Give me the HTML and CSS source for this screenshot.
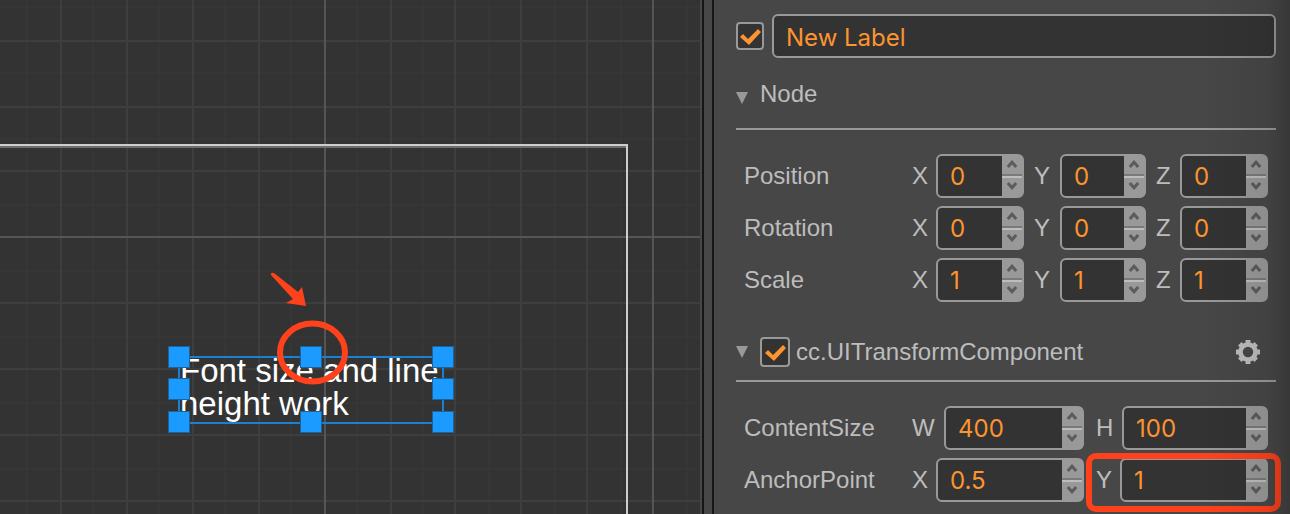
FILE: index.html
```html
<!DOCTYPE html>
<html lang="en">
<head>
    <meta charset="UTF-8">
    <meta name="viewport" content="width=device-width, initial-scale=1.0">
    <title>Scene Editor</title>
    <link rel="stylesheet" href="styles.css">
</head>
<body>
    <svg class="symbols" aria-hidden="true">
        <symbol id="chevron-up" viewBox="0 0 12 8"><path d="M1.8 7 L6 2.2 L10.2 7"/></symbol>
        <symbol id="chevron-down" viewBox="0 0 12 8"><path d="M1.8 1 L6 5.8 L10.2 1"/></symbol>
    </svg>

    <main class="scene">
        <svg class="grid" aria-hidden="true">
            <!-- fine lines -->
            <path class="grid-fine" d="M27 0V2000 M93 0V2000 M159 0V2000 M225 0V2000 M291 0V2000 M357 0V2000 M423 0V2000 M489 0V2000 M555 0V2000 M621 0V2000 M687 0V2000
                M0 7H2000 M0 73H2000 M0 139H2000 M0 205H2000 M0 271H2000 M0 337H2000 M0 403H2000 M0 469H2000"/>
            <path class="grid-minor" d="M61 0V2000 M127 0V2000 M193 0V2000 M259 0V2000 M391 0V2000 M455 0V2000 M521 0V2000 M587 0V2000
                M0 41H2000 M0 107H2000 M0 171H2000 M0 303H2000 M0 369H2000 M0 435H2000 M0 501H2000"/>
            <path class="grid-major" d="M325 0V2000 M653 0V2000 M0 237H2000"/>
            <!-- design canvas border -->
            <path class="frame-shade" d="M0 147H626"/>
            <path class="frame-line" d="M0 145H627V2000"/>
        </svg>

        <div class="node">
            <p class="node-text">Font size and line height work</p>
            <span class="handle top left"></span>
            <span class="handle top center"></span>
            <span class="handle top right"></span>
            <span class="handle middle left"></span>
            <span class="handle middle right"></span>
            <span class="handle bottom left"></span>
            <span class="handle bottom center"></span>
            <span class="handle bottom right"></span>
        </div>

        <svg class="marks" aria-hidden="true">
            <path class="arrow" d="M271 275 Q270 272 274 273 L298 292 L302 287 L306 306 L286 303 L293 299 Z"/>
            <ellipse class="ring" cx="312.5" cy="352.5" rx="32.5" ry="29"/>
        </svg>
    </main>

    <div class="splitter"></div>

    <aside class="inspector">
        <div class="name-row">
            <input type="checkbox" class="check" aria-label="Node enabled" checked>
            <input type="text" class="name-input" aria-label="Node name" value="New Label">
        </div>

        <section>
            <header class="section-header tall">
                <span class="fold"></span>
                <h2>Node</h2>
            </header>
            <div class="props">
                <div class="prop">
                    <span class="prop-name">Position</span>
                    <div class="field">
                        <label for="pos-x">X</label>
                        <div class="number">
                            <input type="text" id="pos-x" value="0">
                            <div class="spin">
                                <button aria-label="Increase"><svg><use href="#chevron-up"/></svg></button>
                                <button aria-label="Decrease"><svg><use href="#chevron-down"/></svg></button>
                            </div>
                        </div>
                    </div>
                    <div class="field">
                        <label for="pos-y" class="axis-y">Y</label>
                        <div class="number">
                            <input type="text" id="pos-y" value="0">
                            <div class="spin">
                                <button aria-label="Increase"><svg><use href="#chevron-up"/></svg></button>
                                <button aria-label="Decrease"><svg><use href="#chevron-down"/></svg></button>
                            </div>
                        </div>
                    </div>
                    <div class="field">
                        <label for="pos-z">Z</label>
                        <div class="number">
                            <input type="text" id="pos-z" value="0">
                            <div class="spin">
                                <button aria-label="Increase"><svg><use href="#chevron-up"/></svg></button>
                                <button aria-label="Decrease"><svg><use href="#chevron-down"/></svg></button>
                            </div>
                        </div>
                    </div>
                </div>

                <div class="prop">
                    <span class="prop-name">Rotation</span>
                    <div class="field">
                        <label for="rot-x">X</label>
                        <div class="number">
                            <input type="text" id="rot-x" value="0">
                            <div class="spin">
                                <button aria-label="Increase"><svg><use href="#chevron-up"/></svg></button>
                                <button aria-label="Decrease"><svg><use href="#chevron-down"/></svg></button>
                            </div>
                        </div>
                    </div>
                    <div class="field">
                        <label for="rot-y" class="axis-y">Y</label>
                        <div class="number">
                            <input type="text" id="rot-y" value="0">
                            <div class="spin">
                                <button aria-label="Increase"><svg><use href="#chevron-up"/></svg></button>
                                <button aria-label="Decrease"><svg><use href="#chevron-down"/></svg></button>
                            </div>
                        </div>
                    </div>
                    <div class="field">
                        <label for="rot-z">Z</label>
                        <div class="number">
                            <input type="text" id="rot-z" value="0">
                            <div class="spin">
                                <button aria-label="Increase"><svg><use href="#chevron-up"/></svg></button>
                                <button aria-label="Decrease"><svg><use href="#chevron-down"/></svg></button>
                            </div>
                        </div>
                    </div>
                </div>

                <div class="prop">
                    <span class="prop-name">Scale</span>
                    <div class="field">
                        <label for="scale-x">X</label>
                        <div class="number">
                            <input type="text" id="scale-x" value="1">
                            <div class="spin">
                                <button aria-label="Increase"><svg><use href="#chevron-up"/></svg></button>
                                <button aria-label="Decrease"><svg><use href="#chevron-down"/></svg></button>
                            </div>
                        </div>
                    </div>
                    <div class="field">
                        <label for="scale-y" class="axis-y">Y</label>
                        <div class="number">
                            <input type="text" id="scale-y" value="1">
                            <div class="spin">
                                <button aria-label="Increase"><svg><use href="#chevron-up"/></svg></button>
                                <button aria-label="Decrease"><svg><use href="#chevron-down"/></svg></button>
                            </div>
                        </div>
                    </div>
                    <div class="field">
                        <label for="scale-z">Z</label>
                        <div class="number">
                            <input type="text" id="scale-z" value="1">
                            <div class="spin">
                                <button aria-label="Increase"><svg><use href="#chevron-up"/></svg></button>
                                <button aria-label="Decrease"><svg><use href="#chevron-down"/></svg></button>
                            </div>
                        </div>
                    </div>
                </div>
            </div>
        </section>

        <section>
            <header class="section-header">
                <span class="fold"></span>
                <input type="checkbox" class="check large" id="ui-transform" checked>
                <h2><label for="ui-transform">cc.UITransformComponent</label></h2>
                <button class="gear" aria-label="Component settings">
                    <svg viewBox="0 0 24 24">
                        <circle cx="12" cy="12" r="7.5" fill="none" stroke="currentColor" stroke-width="4.6"/>
                        <path d="M12 0V4 M12 20V24 M0 12H4 M20 12H24 M3.8 3.8L6.4 6.4 M17.6 17.6L20.2 20.2 M20.2 3.8L17.6 6.4 M6.4 17.6L3.8 20.2" stroke="currentColor" stroke-width="5"/>
                    </svg>
                </button>
            </header>
            <div class="props">
                <div class="prop pair">
                    <span class="prop-name">ContentSize</span>
                    <div class="field">
                        <label for="size-w" class="axis-w">W</label>
                        <div class="number">
                            <input type="text" id="size-w" value="400">
                            <div class="spin">
                                <button aria-label="Increase"><svg><use href="#chevron-up"/></svg></button>
                                <button aria-label="Decrease"><svg><use href="#chevron-down"/></svg></button>
                            </div>
                        </div>
                    </div>
                    <div class="field">
                        <label for="size-h" class="axis-y">H</label>
                        <div class="number">
                            <input type="text" id="size-h" value="100">
                            <div class="spin">
                                <button aria-label="Increase"><svg><use href="#chevron-up"/></svg></button>
                                <button aria-label="Decrease"><svg><use href="#chevron-down"/></svg></button>
                            </div>
                        </div>
                    </div>
                </div>

                <div class="prop pair">
                    <span class="prop-name">AnchorPoint</span>
                    <div class="field">
                        <label for="anchor-x">X</label>
                        <div class="number">
                            <input type="text" id="anchor-x" value="0.5">
                            <div class="spin">
                                <button aria-label="Increase"><svg><use href="#chevron-up"/></svg></button>
                                <button aria-label="Decrease"><svg><use href="#chevron-down"/></svg></button>
                            </div>
                        </div>
                    </div>
                    <div class="field highlighted">
                        <label for="anchor-y">Y</label>
                        <div class="number">
                            <input type="text" id="anchor-y" value="1">
                            <div class="spin">
                                <button aria-label="Increase"><svg><use href="#chevron-up"/></svg></button>
                                <button aria-label="Decrease"><svg><use href="#chevron-down"/></svg></button>
                            </div>
                        </div>
                    </div>
                </div>
            </div>
        </section>
    </aside>
</body>
</html>
```
FILE: styles.css
```css
* {
    box-sizing: border-box;
}
body {
    margin: 0;
    display: flex;
    min-height: 100vh;
    background: #474747;
    color: #bdbdbd;
    font-family: "Liberation Sans", Arial, sans-serif;
    font-size: 24px;
    overflow: hidden;
}
.symbols {
    position: absolute;
    width: 0;
    height: 0;
}

/* scene view */
.scene {
    position: relative;
    flex: 1;
    min-width: 0;
    overflow: hidden;
    background: #333;
    border-right: 2px solid #474747;
}
.grid,
.marks {
    position: absolute;
    top: 0;
    left: 0;
    width: 100%;
    height: 100%;
}
.grid path {
    fill: none;
    stroke-width: 2;
}
.grid .grid-fine {
    stroke: #363636;
}
.grid .grid-minor {
    stroke: #3e3e3e;
}
.grid .grid-major {
    stroke: #555;
}
.grid .frame-shade {
    stroke: #6b6e6b;
}
.grid .frame-line {
    stroke: #cbcecb;
}
.arrow {
    fill: #ff421c;
}
.ring {
    fill: none;
    stroke: #ff421c;
    stroke-width: 6;
}
.node {
    position: absolute;
    left: 178px;
    top: 356px;
    width: 266px;
    height: 68px;
    border: 2px solid #1a80d2;
}
.node-text {
    margin: -4px 0 0;
    color: white;
    font-size: 33px;
    line-height: 33px;
}
.handle {
    position: absolute;
    width: 22px;
    height: 22px;
    background: #1b9aff;
    border: 1px solid #1c629b;
}
.handle.top {
    top: -12px;
}
.handle.middle {
    top: 20px;
}
.handle.bottom {
    bottom: -11px;
}
.handle.left {
    left: -12px;
}
.handle.center {
    left: 120px;
}
.handle.right {
    right: -12px;
}

.splitter {
    width: 12px;
    border: solid #161616;
    border-width: 0 2px;
}

/* inspector */
.inspector {
    position: relative;
    width: 576px;
    padding: 14px 14px 12px 22px;
}
.inspector::after {
    content: "";
    position: absolute;
    top: 0;
    right: 0;
    bottom: 0;
    width: 90px;
    background: linear-gradient(to right, rgba(0, 0, 0, 0), rgba(0, 0, 0, 0.08) 75%, rgba(0, 0, 0, 0.22));
    pointer-events: none;
}
.name-row {
    display: flex;
    align-items: center;
    gap: 8px;
}
input[type="text"] {
    min-width: 0;
    background: #333;
    color: #fd942f;
    font-family: Inter, sans-serif;
    font-size: 24px;
    outline: none;
}
.name-input {
    flex: 1;
    height: 44px;
    padding: 2px 12px 0;
    border: 2px solid #999;
    border-radius: 6px;
}
.check {
    appearance: none;
    position: relative;
    flex: none;
    width: 28px;
    height: 28px;
    margin: 0;
    background: #333;
    border: 2px solid #999;
    border-radius: 4px;
}
.check.large {
    width: 30px;
    height: 30px;
}
.check:checked::after {
    content: "";
    position: absolute;
    top: 0;
    left: 0;
    width: 24px;
    height: 24px;
    background: #fd942f;
    clip-path: polygon(2px 13px, 5px 10px, 10px 15px, 20px 5px, 23px 8px, 11px 21px);
}
.check.large:checked::after {
    top: 1px;
    left: 1px;
}
.section-header {
    display: flex;
    align-items: center;
    height: 58px;
    border-bottom: 2px solid #999;
}
.section-header.tall {
    height: 72px;
    padding-top: 2px;
}
.section-header h2 {
    margin: 0;
    font-size: 24px;
    font-weight: normal;
}
.fold {
    width: 12px;
    height: 12px;
    margin-right: 12px;
    background: #999;
    clip-path: polygon(0 0, 100% 0, 50% 100%);
}
.tall .fold {
    margin-top: 8px;
}
.check + h2 {
    margin-left: 6px;
}
.gear {
    width: 24px;
    height: 24px;
    margin-left: auto;
    margin-right: 16px;
    padding: 0;
    border: none;
    background: none;
    color: #bdbdbd;
}
.gear svg {
    display: block;
}
.props {
    display: flex;
    flex-direction: column;
    gap: 8px;
    padding: 24px 8px 22px;
}
section:last-child .props {
    padding-bottom: 0;
}
.prop {
    display: grid;
    grid-template-columns: 158px repeat(3, 1fr);
    column-gap: 10px;
    align-items: center;
}
.prop.pair {
    grid-template-columns: 156px repeat(2, 1fr);
    column-gap: 12px;
}
.field {
    position: relative;
    display: flex;
    align-items: center;
    min-width: 0;
}
.field label {
    flex: none;
    width: 24px;
}
.field .axis-y {
    width: 26px;
}
.field .axis-w {
    width: 32px;
}
.number {
    display: flex;
    flex: 1;
    min-width: 0;
    height: 44px;
    border: 2px solid #999;
    border-radius: 6px;
    background: #999;
}
.number input {
    flex: 1;
    width: 0;
    padding: 0 0 0 12px;
    border: none;
    border-radius: 4px 0 0 4px;
}
.spin {
    display: flex;
    flex-direction: column;
    width: 20px;
}
.spin button {
    display: flex;
    align-items: center;
    justify-content: center;
    flex: 1;
    padding: 0 1px 2px 0;
    border: none;
    background: none;
}
.spin button:first-child {
    border-bottom: 2px solid #7a7a7a;
}
.spin button:last-child {
    border-top: 2px solid #bdbdbd;
}
.spin svg {
    flex: none;
    width: 12px;
    height: 8px;
    fill: none;
    stroke: #5c5c5c;
    stroke-width: 3;
}
.highlighted::after {
    content: "";
    position: absolute;
    top: -5px;
    right: -13px;
    bottom: -10px;
    left: -10px;
    border: 6px solid #ff421c;
    border-radius: 10px;
    pointer-events: none;
}
```
